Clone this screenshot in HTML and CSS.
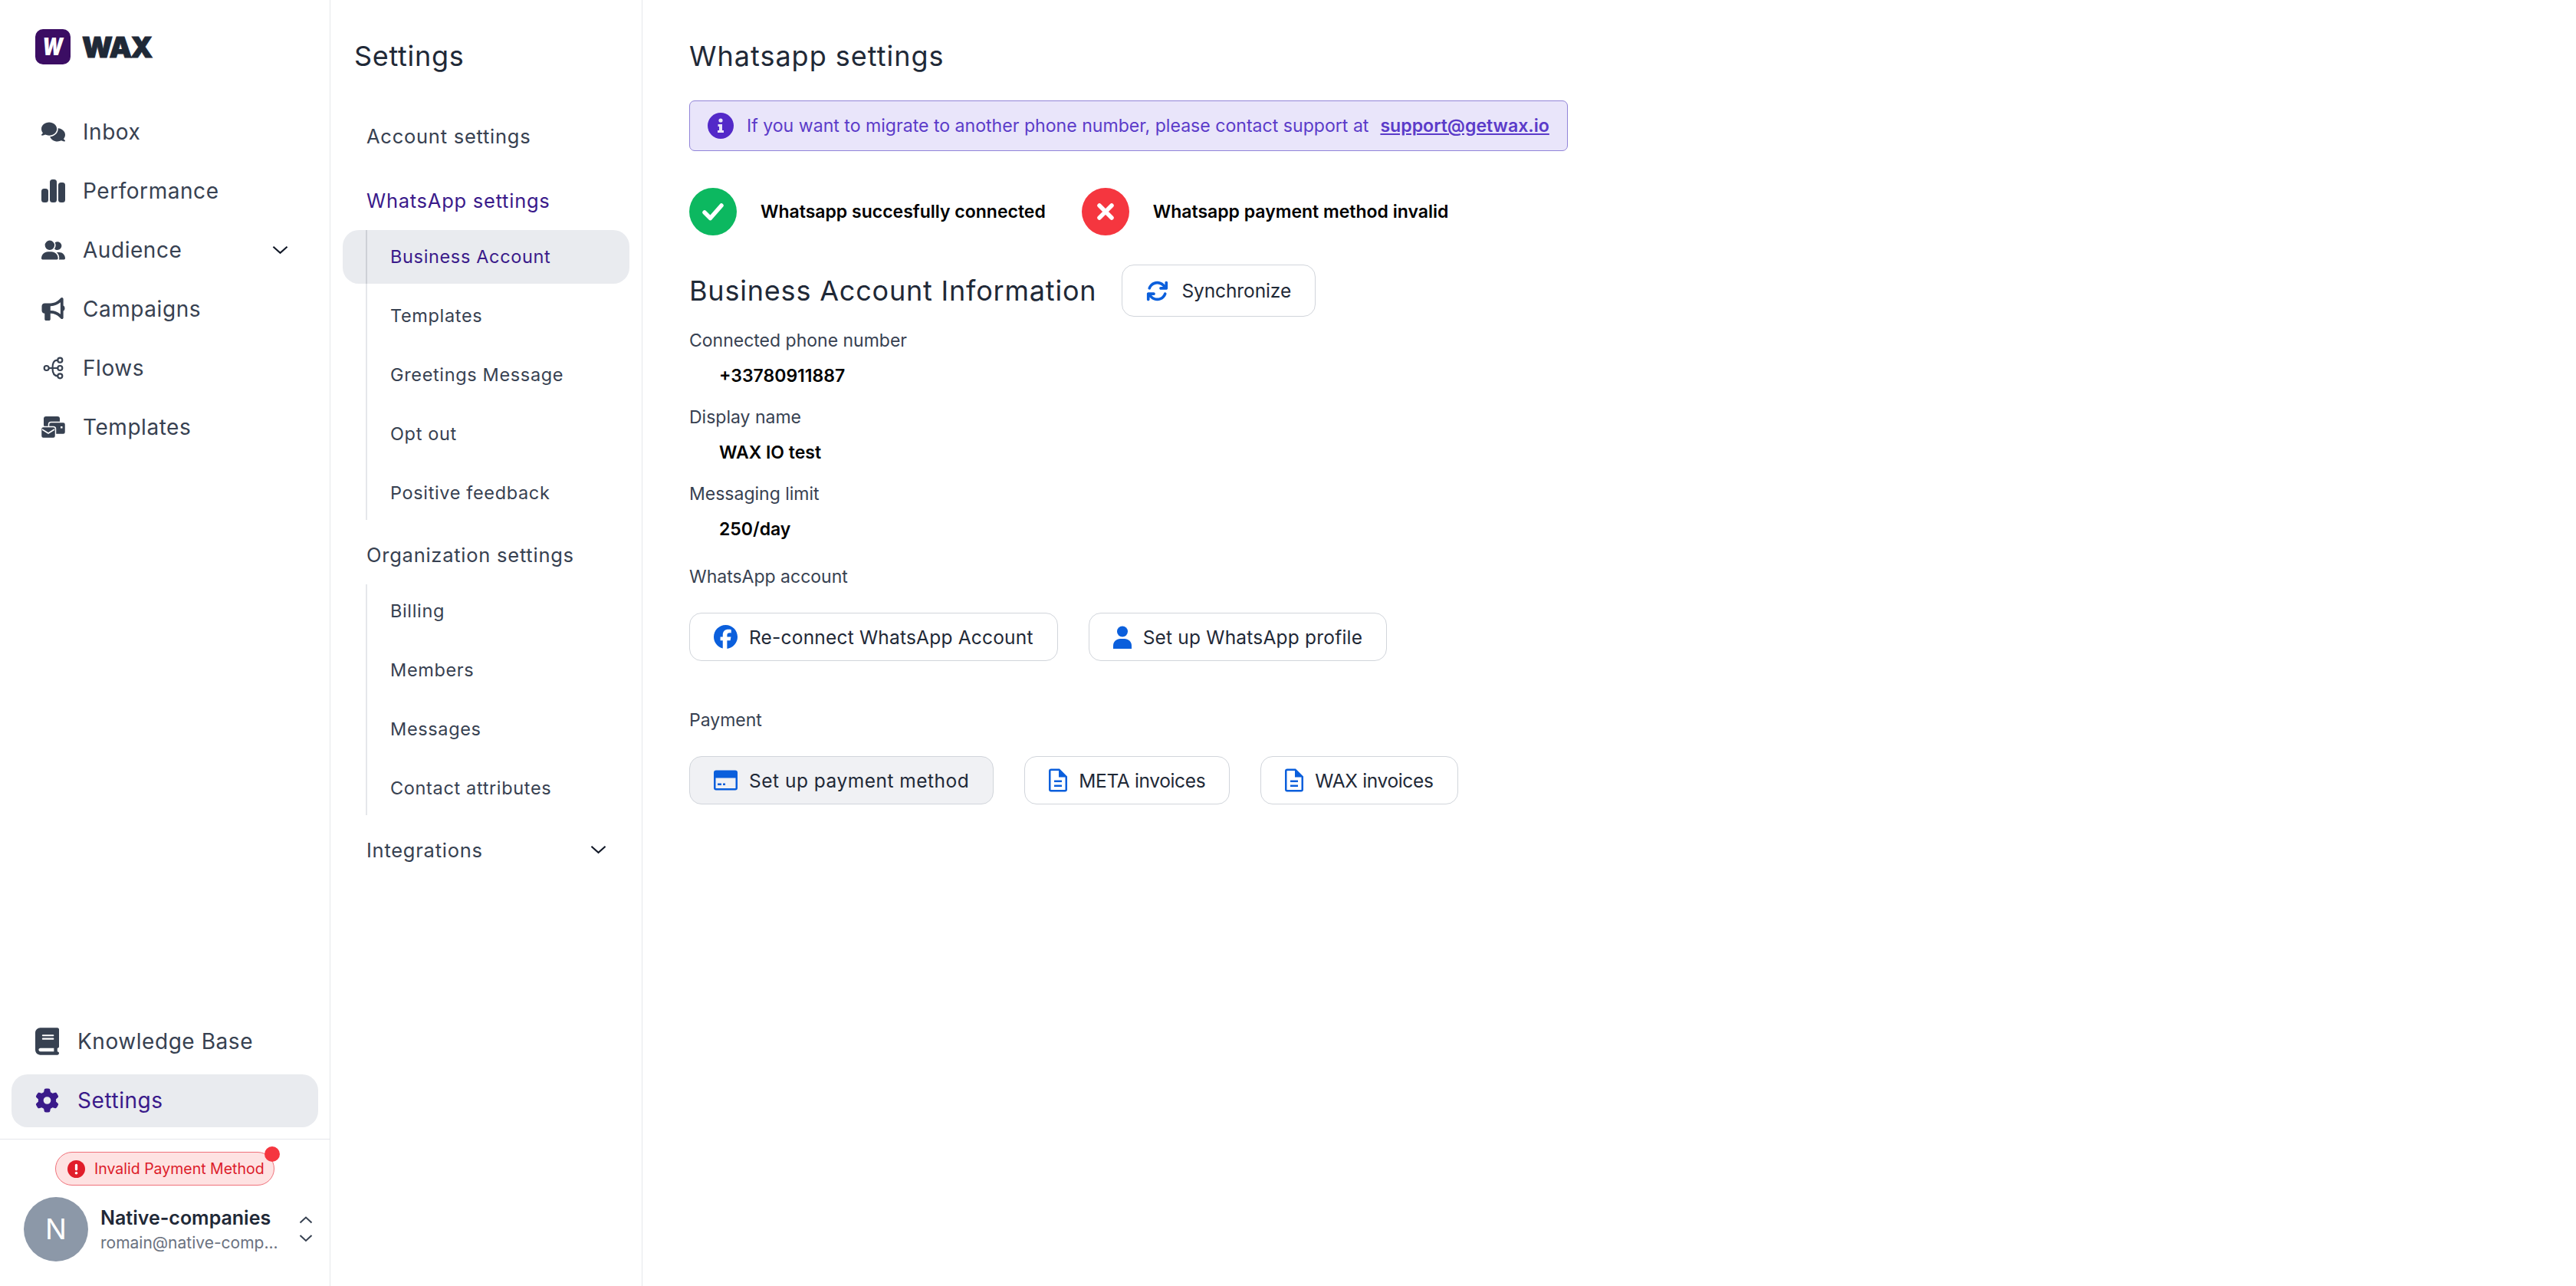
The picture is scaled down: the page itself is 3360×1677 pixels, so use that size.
FILE: index.html
```html
<!DOCTYPE html>
<html lang="en">
  <head>
    <meta charset="UTF-8" />
    <title>WAX - Whatsapp settings</title>
    <link rel="stylesheet" href="styles.css">
  </head>
  <body>
    <div class="app">
      <aside class="sidebar">
        <div class="logo">
          <span class="logo-mark"><span class="logo-letter">W</span></span>
          <span class="logo-text">WAX</span>
        </div>
        <nav class="nav">
          <a class="nav-item">
            <svg class="nav-icon" viewBox="0 0 640 512"><path d="M208 352c114.900 0 208-78.800 208-176S322.900 0 208 0S0 78.800 0 176c0 38.600 14.700 74.300 39.600 103.400c-3.500 9.400-8.700 17.700-14.200 24.700c-4.800 6.200-9.700 11-13.300 14.300c-1.800 1.600-3.300 2.900-4.300 3.700c-.5 .4-.9 .7-1.100 .8l-.2 .2C1 327.200-1.400 334.400 .8 340.900S9.100 352 16 352c21.800 0 43.800-5.600 62.100-12.500c9.200-3.500 17.800-7.400 25.300-11.400C134.100 343.300 169.800 352 208 352zM448 176c0 112.300-99.100 196.900-216.500 207C255.800 457.400 336.400 512 432 512c38.200 0 73.900-8.700 104.700-23.900c7.500 4 16 7.900 25.200 11.400c18.300 6.900 40.300 12.500 62.100 12.500c6.900 0 13.100-4.500 15.200-11.100c2.100-6.600-.2-13.800-5.800-17.900l-.2-.2c-.2-.2-.6-.4-1.100-.8c-1-.8-2.500-2-4.300-3.700c-3.600-3.300-8.500-8.100-13.300-14.300c-5.500-7-10.700-15.400-14.200-24.700c24.900-29 39.600-64.700 39.600-103.400c0-92.800-84.900-168.900-192.600-175.500c.4 5.100 .6 10.300 .6 15.500z"/></svg>
            Inbox
          </a>
          <a class="nav-item">
            <svg class="nav-icon" viewBox="0 0 31 30"><rect x="0" y="12" width="9" height="18" rx="3.500"/><rect x="11" y="0" width="9" height="30" rx="3.500"/><rect x="22" y="4" width="9" height="26" rx="3.500"/></svg>
            Performance
          </a>
          <a class="nav-item">
            <svg class="nav-icon" viewBox="0 0 640 512"><path d="M96 128a128 128 0 1 1 256 0A128 128 0 1 1 96 128zM0 482.300C0 383.800 79.800 304 178.300 304h91.400C368.200 304 448 383.800 448 482.300c0 16.400-13.300 29.700-29.700 29.700H29.700C13.300 512 0 498.700 0 482.300zM609.300 512H471.400c5.400-9.400 8.600-20.300 8.600-32v-8c0-60.700-27.100-115.200-69.800-151.800c2.400-.1 4.700-.2 7.100-.2h61.400C567.800 320 640 392.200 640 481.300c0 17-13.800 30.700-30.700 30.700zM432 256c-31 0-59-12.600-79.300-32.900C372.400 196.500 384 163.600 384 128c0-26.800-6.600-52.100-18.300-74.300C384.300 40.100 407.200 32 432 32c61.900 0 112 50.100 112 112s-50.100 112-112 112z"/></svg>
            Audience
            <svg class="chevron nav-chevron" viewBox="0 0 22 12"><path d="M1.500 1.500 11 10l9.500-8.500"/></svg>
          </a>
          <a class="nav-item">
            <svg class="nav-icon" viewBox="0 0 512 512"><path d="M480 32c0-12.900-7.800-24.600-19.800-29.600s-25.700-2.200-34.900 6.900L381.700 53c-48 48-113.100 75-181 75H64c-35.300 0-64 28.700-64 64v96c0 35.300 28.700 64 64 64l0 128c0 17.700 14.300 32 32 32h64c17.700 0 32-14.300 32-32V352l8.700 0c67.900 0 133 27 181 75l43.600 43.600c9.200 9.200 22.900 11.900 34.900 6.900s19.800-16.600 19.800-29.600V300.400c18.600-8.800 32-32.500 32-60.400s-13.400-51.600-32-60.400V32zm-64 76.700V371.300C357.200 317.800 280.500 288 200.700 288H192V192h8.700c79.800 0 156.500-29.800 215.300-83.300z"/></svg>
            Campaigns
          </a>
          <a class="nav-item">
            <svg class="nav-icon flow-icon" viewBox="0 0 31 28"><circle cx="6.700" cy="14" r="3"/><circle cx="24.300" cy="3.700" r="3"/><circle cx="24.300" cy="14" r="3"/><circle cx="24.300" cy="24.300" r="3"/><path d="M9.700 14H21.300M21.300 3.700c-5.500 0-6.800 4-6.800 10.300s1.300 10.300 6.800 10.300"/></svg>
            Flows
          </a>
          <a class="nav-item">
            <svg class="nav-icon" viewBox="0 0 31 28">
              <rect x="3" y="0" width="21" height="14" rx="3"/>
              <rect x="9.500" y="7.500" width="22" height="16" rx="3" stroke="#fff" stroke-width="1.500"/>
              <rect x="25" y="13" width="2.500" height="2.500" fill="#fff"/>
              <rect x="-.5" y="13.500" width="19" height="15" rx="3" stroke="#fff" stroke-width="1.500"/>
              <path class="envelope-flap" d="M1 17l8 5 8-5"/>
            </svg>
            Templates
          </a>
        </nav>
        <div class="bottom-nav">
          <a class="bottom-item">
            <svg class="bottom-icon" viewBox="0 0 448 512"><path d="M96 0C43 0 0 43 0 96V416c0 53 43 96 96 96H416c17.700 0 32-14.300 32-32s-14.300-32-32-32V384c17.700 0 32-14.300 32-32V32c0-17.700-14.300-32-32-32H96zm0 384H352v64H96c-17.700 0-32-14.300-32-32s14.300-32 32-32zm32-240c0-8.800 7.200-16 16-16H336c8.800 0 16 7.200 16 16s-7.200 16-16 16H144c-8.800 0-16-7.200-16-16zm16 48H336c8.800 0 16 7.200 16 16s-7.200 16-16 16H144c-8.800 0-16-7.200-16-16s7.200-16 16-16z"/></svg>
            Knowledge Base
          </a>
          <a class="bottom-item active">
            <svg class="bottom-icon" viewBox="0 0 512 512"><path d="M495.900 166.600c3.200 8.700 .5 18.400-6.400 24.600l-43.300 39.400c1.100 8.300 1.700 16.800 1.700 25.400s-.6 17.100-1.700 25.400l43.300 39.400c6.900 6.200 9.600 15.900 6.400 24.600c-4.400 11.900-9.700 23.300-15.800 34.300l-4.700 8.100c-6.600 11-14 21.400-22.100 31.200c-5.900 7.200-15.700 9.600-24.500 6.800l-55.700-17.700c-13.400 10.300-28.200 18.900-44 25.400l-12.500 57.100c-2 9.100-9 16.300-18.200 17.800c-13.800 2.300-28 3.500-42.500 3.500s-28.700-1.200-42.500-3.500c-9.200-1.500-16.200-8.700-18.200-17.800l-12.500-57.100c-15.800-6.500-30.600-15.100-44-25.400L83.100 425.900c-8.800 2.800-18.600 .3-24.500-6.800c-8.100-9.800-15.500-20.200-22.100-31.200l-4.700-8.100c-6.100-11-11.400-22.400-15.800-34.300c-3.200-8.700-.5-18.400 6.400-24.600l43.300-39.400C64.600 273.100 64 264.600 64 256s.6-17.100 1.700-25.400L22.400 191.200c-6.900-6.200-9.600-15.900-6.400-24.600c4.400-11.900 9.700-23.300 15.800-34.300l4.700-8.100c6.600-11 14-21.400 22.100-31.200c5.900-7.200 15.700-9.600 24.500-6.800l55.700 17.700c13.400-10.300 28.200-18.900 44-25.400l12.500-57.100c2-9.100 9-16.300 18.200-17.800C227.300 1.200 241.500 0 256 0s28.700 1.200 42.500 3.500c9.200 1.500 16.200 8.700 18.200 17.800l12.500 57.100c15.800 6.500 30.600 15.100 44 25.400l55.700-17.700c8.800-2.800 18.600-.3 24.500 6.800c8.100 9.800 15.500 20.200 22.100 31.200l4.700 8.100c6.100 11 11.400 22.400 15.800 34.300zM256 336a80 80 0 1 0 0-160 80 80 0 1 0 0 160z"/></svg>
            Settings
          </a>
        </div>
        <div class="account">
          <div class="badge">
            <svg class="badge-icon" viewBox="0 0 24 24"><circle cx="12" cy="12" r="12"/><rect x="10.300" y="5" width="3.400" height="9" rx="1.700" fill="#fff"/><circle cx="12" cy="17.500" r="1.900" fill="#fff"/></svg>
            Invalid Payment Method
            <span class="badge-dot"></span>
          </div>
          <div class="user">
            <div class="avatar">N</div>
            <div class="user-info">
              <div class="user-name">Native-companies</div>
              <div class="user-mail">romain@native-comp...</div>
            </div>
            <svg class="user-toggle" viewBox="0 0 18 36"><path d="M1.500 9.500 9 2.500l7.500 7M1.500 26 9 33l7.500-7"/></svg>
          </div>
        </div>
      </aside>

      <aside class="subnav">
        <h2 class="subnav-title">Settings</h2>
        <a class="group-link first">Account settings</a>
        <a class="group-link current">WhatsApp settings</a>
        <div class="sublist">
          <a class="sub-item active">Business Account</a>
          <a class="sub-item">Templates</a>
          <a class="sub-item">Greetings Message</a>
          <a class="sub-item">Opt out</a>
          <a class="sub-item">Positive feedback</a>
        </div>
        <a class="group-link">Organization settings</a>
        <div class="sublist">
          <a class="sub-item">Billing</a>
          <a class="sub-item">Members</a>
          <a class="sub-item">Messages</a>
          <a class="sub-item">Contact attributes</a>
        </div>
        <a class="group-link">
          Integrations
          <svg class="chevron" viewBox="0 0 22 12"><path d="M1.500 1.500 11 10l9.500-8.500"/></svg>
        </a>
      </aside>

      <main class="main">
        <h1 class="page-title">Whatsapp settings</h1>

        <div class="alert">
          <svg class="alert-icon" viewBox="0 0 34 34"><circle cx="17" cy="17" r="17"/><circle cx="17" cy="10" r="2.600" fill="#e9e5fa"/><path d="M13.500 15h5.500v8h2v3h-8v-3h2v-5h-1.500z" fill="#e9e5fa"/></svg>
          <span>If you want to migrate to another phone number, please contact support at</span>
          <a class="alert-link">support@getwax.io</a>
        </div>

        <div class="status-row">
          <div class="status">
            <span class="status-circle ok">
              <svg viewBox="0 0 30 30"><path d="M4 16l7.500 7.500L26 7"/></svg>
            </span>
            Whatsapp succesfully connected
          </div>
          <div class="status">
            <span class="status-circle bad">
              <svg viewBox="0 0 30 30"><path d="M7 7l16 16M23 7 7 23"/></svg>
            </span>
            Whatsapp payment method invalid
          </div>
        </div>

        <div class="section-head">
          <h2 class="section-title">Business Account Information</h2>
          <button class="btn sync-btn">
            <svg class="btn-icon sync-icon" viewBox="0 0 512 512"><path d="M105.100 202.600c7.700-21.800 20.200-42.300 37.800-59.800c62.500-62.500 163.800-62.500 226.300 0L386.300 160H336c-17.700 0-32 14.300-32 32s14.300 32 32 32H463.900c17.700 0 32-14.300 32-32V64c0-17.700-14.300-32-32-32s-32 14.300-32 32v51.200L414.400 97.600c-87.500-87.500-229.300-87.500-316.800 0C73.200 122 55.600 150.700 44.800 181.400c-5.900 16.700 2.900 34.900 19.500 40.800s34.900-2.900 40.800-19.500zM39 289.300c-5 1.500-9.800 4.200-13.700 8.200c-4 4-6.700 8.800-8.100 14c-.3 1.200-.6 2.500-.8 3.800c-.3 1.700-.4 3.400-.4 5.100V448c0 17.700 14.300 32 32 32s32-14.300 32-32V396.900l17.600 17.500c87.500 87.400 229.300 87.400 316.700 0c24.400-24.400 42.100-53.100 52.900-83.700c5.900-16.700-2.900-34.900-19.500-40.800s-34.900 2.900-40.800 19.500c-7.700 21.800-20.200 42.300-37.800 59.800c-62.500 62.500-163.800 62.500-226.300 0l-.1-.1L125.600 352H176c17.700 0 32-14.300 32-32s-14.300-32-32-32H48.400c-1.600 0-3.200 .1-4.800 .3s-3.100 .5-4.600 1z"/></svg>
            Synchronize
          </button>
        </div>

        <div class="field">
          <div class="field-label">Connected phone number</div>
          <div class="field-value">+33780911887</div>
        </div>
        <div class="field">
          <div class="field-label">Display name</div>
          <div class="field-value">WAX IO test</div>
        </div>
        <div class="field">
          <div class="field-label">Messaging limit</div>
          <div class="field-value">250/day</div>
        </div>

        <div class="field-label account-label">WhatsApp account</div>
        <div class="btn-row">
          <button class="btn">
            <svg class="btn-icon" viewBox="0 0 512 512"><path d="M512 256C512 114.600 397.400 0 256 0S0 114.600 0 256C0 376 82.700 476.800 194.200 504.500V334.200H141.400V256h52.800V222.300c0-87.100 39.400-127.500 125-127.500c16.200 0 44.200 3.200 55.700 6.400V172c-6-.6-16.500-1-29.600-1c-42 0-58.200 15.900-58.200 57.200V256h83.600l-14.400 78.200H287V510.100C413.800 494.800 512 386.900 512 256z"/></svg>
            Re-connect WhatsApp Account
          </button>
          <button class="btn">
            <svg class="btn-icon small" viewBox="0 0 24 30"><circle cx="12" cy="7.500" r="7"/><path d="M0 30v-4c0-5.500 4.500-9 9-9h6c4.500 0 9 3.500 9 9v4z"/></svg>
            Set up WhatsApp profile
          </button>
        </div>

        <div class="field-label payment-label">Payment</div>
        <div class="btn-row">
          <button class="btn muted wide">
            <svg class="btn-icon" viewBox="0 0 31 26"><path fill-rule="evenodd" d="M3 0h25a3 3 0 0 1 3 3v20a3 3 0 0 1-3 3H3a3 3 0 0 1-3-3V3a3 3 0 0 1 3-3zM2.500 10v13a.5.5 0 0 0 .5.500h25a.5.5 0 0 0 .5-.5V10zM5 17h5v2.500H5zM12 17h3v2.500h-3z"/></svg>
            Set up payment method
          </button>
          <button class="btn tight">
            <svg class="btn-icon doc" viewBox="0 0 24 30"><path fill-rule="evenodd" d="M3 0h11l10 10v17a3 3 0 0 1-3 3H3a3 3 0 0 1-3-3V3a3 3 0 0 1 3-3zM3 2.500a.5.5 0 0 0-.5.500v24a.5.5 0 0 0 .5.500h18a.5.5 0 0 0 .5-.5V11H13V2.500zM7 15h10v2.500H7zM7 21h10v2.500H7z"/></svg>
            META invoices
          </button>
          <button class="btn tight">
            <svg class="btn-icon doc" viewBox="0 0 24 30"><path fill-rule="evenodd" d="M3 0h11l10 10v17a3 3 0 0 1-3 3H3a3 3 0 0 1-3-3V3a3 3 0 0 1 3-3zM3 2.500a.5.5 0 0 0-.5.500v24a.5.5 0 0 0 .5.500h18a.5.5 0 0 0 .5-.5V11H13V2.500zM7 15h10v2.500H7zM7 21h10v2.500H7z"/></svg>
            WAX invoices
          </button>
        </div>
      </main>
    </div>
  </body>
</html>
```

FILE: styles.css
```css
* {
  box-sizing: border-box;
}
body {
  margin: 0;
  font-family: "Inter", "Liberation Sans", sans-serif;
  background: #fff;
  color: #374151;
}
.app {
  display: flex;
  height: 100vh;
}

/* left sidebar */
.sidebar {
  width: 431px;
  flex-shrink: 0;
  display: flex;
  flex-direction: column;
  border-right: 1px solid #e5e7eb;
}
.logo {
  display: flex;
  align-items: center;
  gap: 15px;
  height: 46px;
  margin: 38px 0 50px 46px;
}
.logo-mark {
  width: 46px;
  height: 46px;
  border-radius: 10px;
  background: #3b0d63;
  color: #fff;
  font-size: 31px;
  font-weight: 900;
  font-style: italic;
  text-align: center;
  line-height: 46px;
}
.logo-letter {
  display: inline-block;
  transform: scaleX(0.8);
}
.logo-text {
  font-size: 37px;
  font-weight: 900;
  letter-spacing: -1.5px;
  color: #1f2937;
  -webkit-text-stroke: 1px #1f2937;
}
.nav {
  flex: 1;
}
.nav-item {
  display: flex;
  align-items: center;
  gap: 23px;
  height: 77px;
  padding-left: 54px;
  padding-bottom: 1px;
  font-size: 28px;
  letter-spacing: 0.55px;
  color: #374151;
}
.nav-icon {
  width: 31px;
  height: 30px;
  fill: #374151;
  flex-shrink: 0;
}
.flow-icon {
  fill: none;
  stroke: #374151;
  stroke-width: 2.2;
}
.envelope-flap {
  fill: none;
  stroke: #fff;
  stroke-width: 1.5;
}
.chevron {
  width: 21px;
  height: 12px;
  fill: none;
  stroke: #111827;
  stroke-width: 2.2;
}
.nav-chevron {
  margin-left: auto;
  margin-right: 54px;
}
.bottom-nav {
  padding: 0 15px;
}
.bottom-item {
  display: flex;
  align-items: center;
  gap: 24px;
  height: 69px;
  padding-left: 31px;
  padding-bottom: 2px;
  margin-top: 8px;
  border-radius: 21px;
  font-size: 28px;
  letter-spacing: 0.55px;
  color: #374151;
}
.bottom-item.active {
  background: #e9ebef;
  color: #3a1a8a;
}
.bottom-icon {
  width: 31px;
  height: 36px;
  fill: #374151;
  flex-shrink: 0;
}
.bottom-item.active .bottom-icon {
  fill: #3a1a8a;
}
.account {
  margin-top: 15px;
  height: 192px;
  padding-top: 16px;
  border-top: 1px solid #e5e7eb;
}
.badge {
  position: relative;
  display: flex;
  align-items: center;
  gap: 12px;
  width: 286px;
  height: 44px;
  margin-left: 72px;
  padding-left: 15px;
  border: 1px solid #f0717a;
  border-radius: 22px;
  background: #fee2e2;
  color: #dc1c2a;
  font-size: 19.5px;
  white-space: nowrap;
}
.badge-icon {
  width: 23px;
  height: 23px;
  fill: #e11d2a;
  flex-shrink: 0;
}
.badge-dot {
  position: absolute;
  top: -8px;
  right: -8px;
  width: 20px;
  height: 20px;
  border-radius: 50%;
  background: #f5363f;
}
.user {
  display: flex;
  align-items: center;
  margin: 15px 0 0 31px;
}
.avatar {
  width: 84px;
  height: 84px;
  border-radius: 50%;
  flex-shrink: 0;
  background: #8c98a8;
  color: #fff;
  font-size: 37px;
  text-align: center;
  line-height: 84px;
}
.user-info {
  width: 233px;
  margin-left: 16px;
  padding-top: 4px;
}
.user-name {
  font-size: 25px;
  font-weight: 600;
  color: #1f2937;
  line-height: 32px;
}
.user-mail {
  font-size: 21px;
  color: #6b7280;
  line-height: 34px;
  white-space: nowrap;
}
.user-toggle {
  width: 18px;
  height: 36px;
  margin-left: 26px;
  fill: none;
  stroke: #374151;
  stroke-width: 2;
}

/* settings column */
.subnav {
  width: 407px;
  flex-shrink: 0;
  padding: 0 16px;
  border-right: 1px solid #e5e7eb;
}
.subnav-title {
  margin: 52px 0 0 15px;
  height: 42px;
  line-height: 42px;
  font-size: 36px;
  font-weight: 400;
  letter-spacing: 0.7px;
  color: #1f2937;
}
.group-link {
  display: flex;
  align-items: center;
  justify-content: space-between;
  height: 40px;
  margin-top: 44px;
  padding: 0 30px 0 31px;
  font-size: 25.5px;
  letter-spacing: 0.75px;
  font-weight: 400;
  color: #374151;
  white-space: nowrap;
}
.group-link.first {
  margin-top: 63px;
}
.group-link.current {
  color: #3a1a8a;
}
.sublist + .group-link {
  margin-top: 25px;
}
.sublist {
  margin: 19px 0 0 30px;
  border-left: 2px solid #e5e7eb;
}
.sub-item {
  display: flex;
  align-items: center;
  height: 70px;
  margin-bottom: 7px;
  padding-left: 30px;
  padding-bottom: 2px;
  font-size: 23.5px;
  letter-spacing: 0.65px;
  font-weight: 400;
  color: #374151;
  white-space: nowrap;
}
.sub-item:last-child {
  margin-bottom: 0;
}
.sub-item.active {
  margin-left: -32px;
  padding-left: 62px;
  border-radius: 21px;
  background: linear-gradient(to right, #e9ebef 30px, #cdd0d6 30px, #cdd0d6 32px, #e9ebef 32px);
  color: #3a1a8a;
}

/* main content */
.main {
  flex: 1;
  padding: 52px 0 0 61px;
}
.page-title {
  margin: 0;
  height: 42px;
  line-height: 42px;
  font-size: 36px;
  font-weight: 400;
  letter-spacing: 1px;
  color: #1f2937;
}
.alert {
  display: flex;
  align-items: center;
  width: 1146px;
  height: 66px;
  margin-top: 37px;
  padding-left: 23px;
  border: 1px solid #9184d8;
  border-radius: 7px;
  background: #e9e5fa;
  color: #5b3bc9;
  font-size: 23.1px;
  white-space: nowrap;
}
.alert-icon {
  width: 34px;
  height: 34px;
  margin-right: 17px;
  fill: #5329c8;
  flex-shrink: 0;
}
.alert-link {
  margin-left: 15px;
  font-weight: 600;
  text-decoration: underline;
}
.status-row {
  display: flex;
  gap: 47px;
  margin-top: 48px;
}
.status {
  display: flex;
  align-items: center;
  gap: 31px;
  font-size: 23px;
  font-weight: 600;
  color: #000;
}
.status-circle {
  display: flex;
  align-items: center;
  justify-content: center;
  width: 62px;
  height: 62px;
  border-radius: 50%;
}
.status-circle svg {
  width: 30px;
  height: 30px;
  fill: none;
  stroke: #fff;
  stroke-width: 5.500;
  stroke-linecap: round;
  stroke-linejoin: round;
}
.status-circle.ok {
  background: #0cb860;
}
.status-circle.bad {
  background: #f5363f;
}
.section-head {
  display: flex;
  align-items: center;
  gap: 33px;
  margin-top: 38px;
}
.section-title {
  margin: 0;
  font-size: 36px;
  font-weight: 400;
  letter-spacing: 0.8px;
  color: #1f2937;
}
.btn {
  display: flex;
  align-items: center;
  gap: 15px;
  height: 63px;
  padding: 0 31px;
  border: 1.5px solid #d1d5db;
  border-radius: 16px;
  background: #fff;
  font-family: inherit;
  font-size: 24.5px;
  font-weight: 400;
  letter-spacing: 0.2px;
  color: #1f2937;
  white-space: nowrap;
}
.btn.muted {
  background: #f0f1f4;
}
.btn.wide {
  letter-spacing: 0.5px;
}
.btn.tight {
  letter-spacing: -0.35px;
}
.sync-btn {
  height: 68px;
  gap: 17px;
  letter-spacing: -0.1px;
}
.btn-icon {
  width: 31px;
  height: 31px;
  fill: #0b5fdc;
  flex-shrink: 0;
}
.sync-icon {
  width: 29px;
  height: 29px;
}
.btn-icon.small {
  width: 24px;
  height: 30px;
}
.btn-icon.doc {
  width: 24px;
  height: 31px;
}
.field {
  margin-top: 16px;
}
.field + .field {
  margin-top: 24px;
}
.field-label {
  height: 30px;
  line-height: 30px;
  font-size: 23px;
  color: #374151;
}
.field-value {
  height: 30px;
  line-height: 30px;
  margin: 16px 0 0 39px;
  font-size: 23px;
  font-weight: 600;
  color: #000;
}
.account-label {
  margin-top: 32px;
}
.payment-label {
  margin-top: 62px;
}
.btn-row {
  display: flex;
  gap: 40px;
  margin-top: 32px;
}
```
